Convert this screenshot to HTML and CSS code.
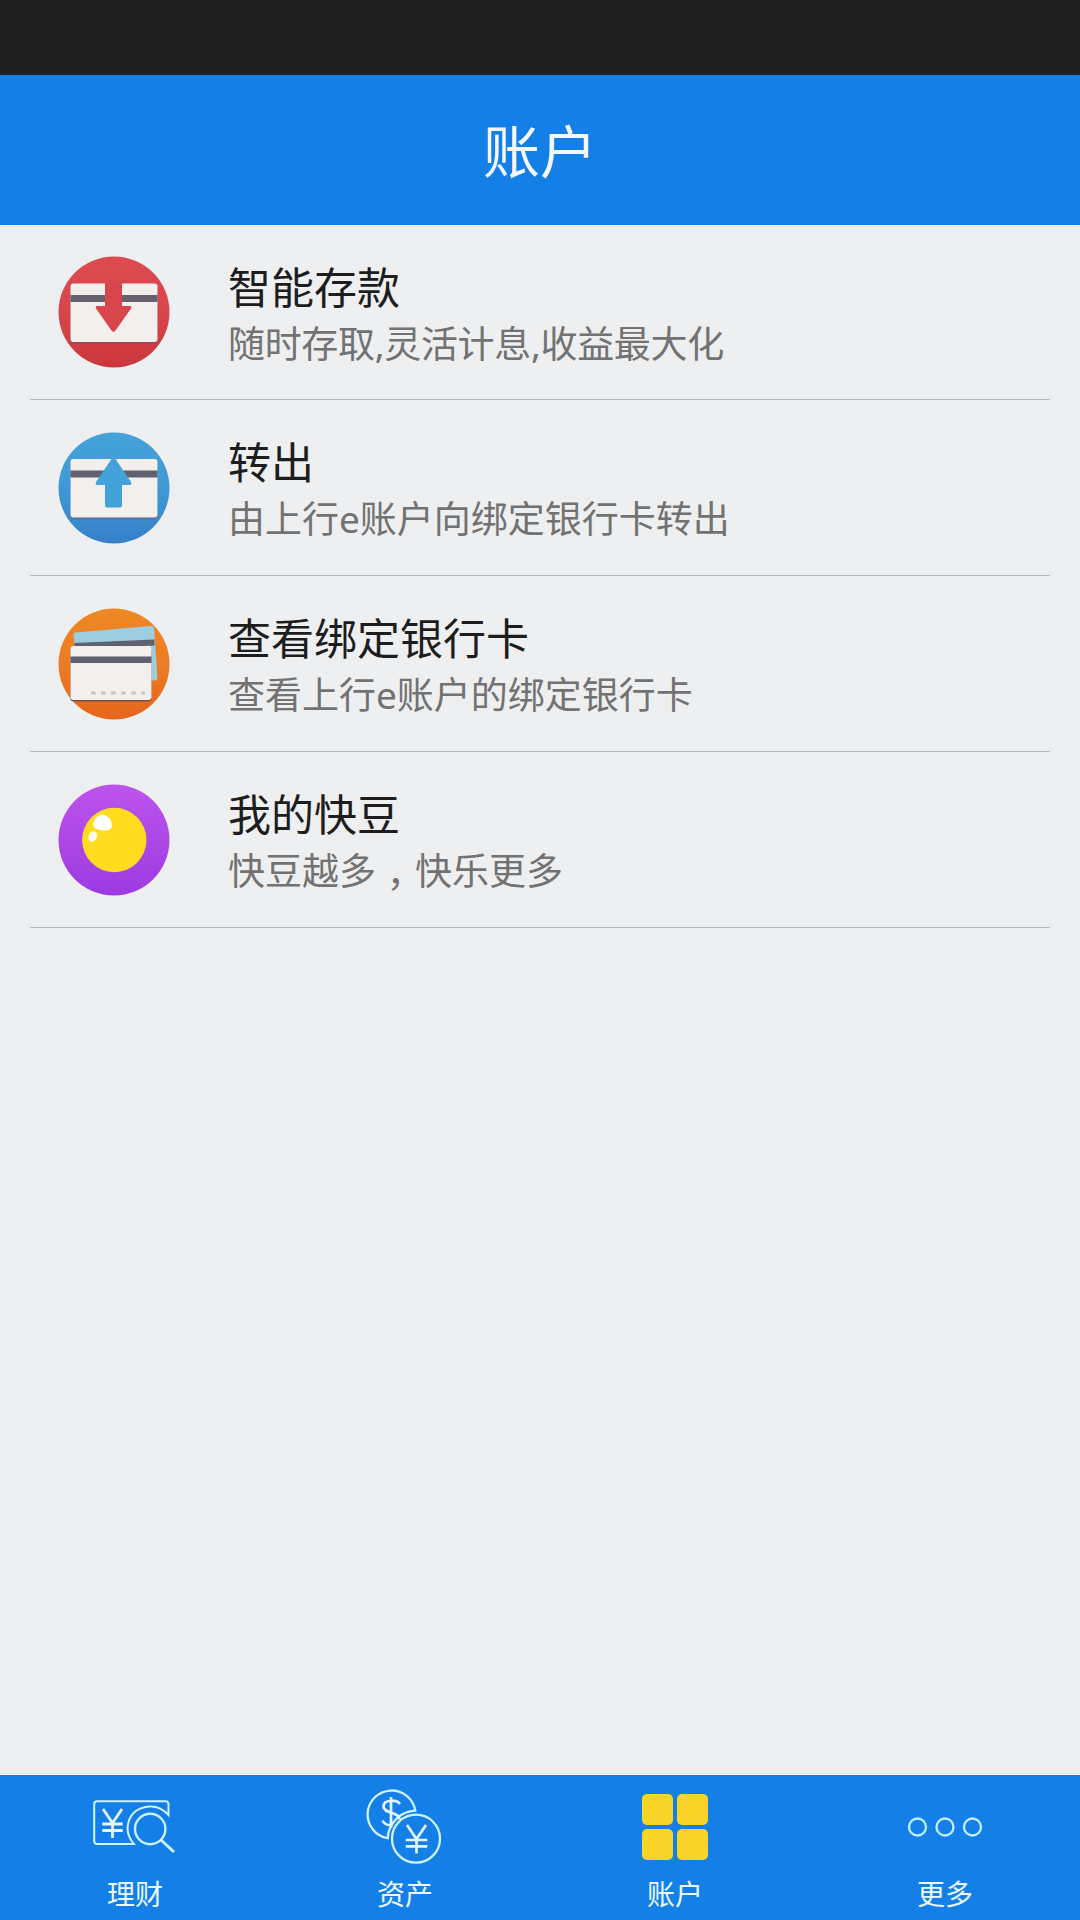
FILE: index.html
```html
<!DOCTYPE html>
<html lang="zh-CN">
<head>
<meta charset="utf-8">
<title>账户</title>
<link rel="stylesheet" href="styles.css">
</head>
<body>
<div class="status-bar"></div>
<header class="header"><h1 class="header-title">账户</h1></header>
<main class="list">
  <div class="row">
    <svg class="row-icon" viewBox="0 0 112 112">
      <defs><linearGradient id="red" x1="0" y1="0" x2="0" y2="1"><stop offset="0" stop-color="#dc4b50"/><stop offset=".5" stop-color="#d8454a"/><stop offset="1" stop-color="#c9363c"/></linearGradient></defs>
      <circle cx="56" cy="56" r="55.5" fill="url(#red)"/>
      <rect x="12.5" y="29" width="87" height="58.5" rx="3" fill="#8d4c57"/>
      <rect x="12.5" y="27.5" width="87" height="58.5" rx="3" fill="#f2efed"/>
      <path d="M12.5 39H99.5V46H12.5Z" fill="#66616f"/>
      <path d="M47 26.5H64V50H72Q74 50.5 73 52.5L57.5 74.5Q55.5 77 53.5 74.5L38 52.5Q37 50.5 39 50H47Z" fill="#d8454a"/>
    </svg>
    <div class="row-text"><div class="row-title">智能存款</div><div class="row-desc desc-tight">随时存取,灵活计息,收益最大化</div></div>
  </div>
  <div class="row">
    <svg class="row-icon" viewBox="0 0 112 112">
      <defs><linearGradient id="blue" x1="0" y1="0" x2="0" y2="1"><stop offset="0" stop-color="#44a3d9"/><stop offset=".5" stop-color="#3f99d6"/><stop offset="1" stop-color="#3680c8"/></linearGradient></defs>
      <circle cx="56" cy="56" r="55.5" fill="url(#blue)"/>
      <rect x="12.5" y="29" width="87" height="58.5" rx="3" fill="#586f98"/>
      <rect x="12.5" y="27" width="87" height="58.5" rx="3" fill="#f2efed"/>
      <path d="M12.5 38.5H99.5V45.5H12.5Z" fill="#5f6070"/>
      <path d="M53.5 27Q55.5 25 57.5 27L73 50Q74 52.5 72 53H64V73Q64 75.5 61.5 75.5H49.5Q47 75.5 47 73V53H39Q37 52.5 38 50Z" fill="#43a2d9"/>
    </svg>
    <div class="row-text"><div class="row-title">转出</div><div class="row-desc">由上行e账户向绑定银行卡转出</div></div>
  </div>
  <div class="row">
    <svg class="row-icon" viewBox="0 0 112 112">
      <defs><linearGradient id="orange" x1="0" y1="0" x2="0" y2="1"><stop offset="0" stop-color="#ee8825"/><stop offset=".5" stop-color="#ed7c22"/><stop offset="1" stop-color="#e5651c"/></linearGradient></defs>
      <circle cx="56" cy="56" r="55.5" fill="url(#orange)"/>
      <path d="M17 24.5L93 18Q96 18 96.2 21L99.5 70Q99 72.5 97 72.5L20 70L15.5 27Q15.5 25 17 24.5Z" fill="#9ccde1"/>
      <path d="M16.3 35L96.5 31.5V37.5L17 41Z" fill="#5f6070"/>
      <rect x="12.5" y="40" width="81" height="53.5" rx="3" fill="#75504b"/>
      <rect x="12.5" y="38" width="81" height="54" rx="3" fill="#f2efed"/>
      <path d="M12.5 48.5H93.5V55H12.5Z" fill="#5f6070"/>
      <path d="M33 85H87" stroke="#c4c3c5" stroke-width="3" stroke-dasharray="4.5 5.6"/>
    </svg>
    <div class="row-text"><div class="row-title">查看绑定银行卡</div><div class="row-desc">查看上行e账户的绑定银行卡</div></div>
  </div>
  <div class="row">
    <svg class="row-icon" viewBox="0 0 112 112">
      <defs><linearGradient id="purple" x1="0" y1="0" x2="0" y2="1"><stop offset="0" stop-color="#bd54ec"/><stop offset="1" stop-color="#9d3ae0"/></linearGradient></defs>
      <circle cx="56" cy="56" r="55.5" fill="url(#purple)"/>
      <circle cx="56.3" cy="56" r="32.2" fill="#ffdc20"/>
      <path d="M35 40Q37 31 45 30.5Q54 33 54 42Q53 47 46 46.5Q35 46 35 40Z" fill="#fff"/>
      <ellipse cx="34.8" cy="52.5" rx="4.2" ry="5.5" transform="rotate(25 34.8 52.5)" fill="#fffbe8"/>
    </svg>
    <div class="row-text"><div class="row-title">我的快豆</div><div class="row-desc desc-spaced"><span>快豆越多</span><span class="comma">，</span><span>快乐更多</span></div></div>
  </div>
</main>
<nav class="tabs">
  <div class="tab">
    <svg class="tab-icon" viewBox="0 0 90 90" fill="none" stroke="#cdf3ff" stroke-width="2.4">
      <path d="M44 57L42 54.5Q37.5 48 37.5 41Q39 21.500 59 19.500Q70 18.500 78.500 28V17.300Q78.500 14.300 75.500 14.300H7.200Q4.200 14.300 4.200 17.300V54Q4.200 57 7.200 57Z" stroke-width="2"/>
      <circle cx="60.2" cy="42" r="15.2"/>
      <path d="M71 53L84 65" stroke-width="3"/>
      <path d="M13 22L22.5 36L32 22M12.3 37H32.7M12.3 43.5H32.7M22.5 36V51" stroke="#e3f8ff" stroke-width="2.8"/>
    </svg>
    <span class="tab-label">理财</span>
  </div>
  <div class="tab">
    <svg class="tab-icon" viewBox="0 0 90 90" fill="none" stroke="#cdf3ff" stroke-width="2.3">
      <path d="M27.7 51.2A24 24 0 1 1 55.3 23.7A28.8 28.8 0 0 0 27.7 51.2Z"/>
      <circle cx="56" cy="51.7" r="24"/>
      <path d="M40 17C37 12.5 23.5 12 23.5 19.5C23.5 27 39.5 24.5 39.5 32.5M22.5 33.5Q25 38.5 31 38.2M31 10V41" stroke="#e3f8ff" stroke-width="2.7"/>
      <path d="M47 38L56.5 52L66 38M45.7 53H67.3M45.7 59.3H67.3M56.5 51V66.5" stroke="#e3f8ff" stroke-width="2.7"/>
    </svg>
    <span class="tab-label">资产</span>
  </div>
  <div class="tab">
    <svg class="tab-icon" viewBox="0 0 90 90" fill="#f7d427">
      <rect x="12" y="7" width="31" height="31" rx="5"/><rect x="47" y="7" width="31" height="31" rx="5"/>
      <rect x="12" y="42" width="31" height="31" rx="5"/><rect x="47" y="42" width="31" height="31" rx="5"/>
    </svg>
    <span class="tab-label">账户</span>
  </div>
  <div class="tab">
    <svg class="tab-icon" viewBox="0 0 90 90" fill="none" stroke="#bdeeff" stroke-width="2.4">
      <circle cx="17.5" cy="40" r="8.5"/><circle cx="45" cy="40" r="8.5"/><circle cx="72.5" cy="40" r="8.5"/>
    </svg>
    <span class="tab-label">更多</span>
  </div>
</nav>
</body>
</html>
```
FILE: styles.css
```css
* { box-sizing: border-box; }
body {
  margin: 0;
  height: 1920px;
  display: flex;
  flex-direction: column;
  background: #eeeff1;
  font-family: "Noto Sans", "Noto Sans CJK SC", sans-serif;
}
.status-bar { height: 75px; background: #1f1f1f; }
.header {
  height: 150px;
  padding-top: 1px;
  display: flex;
  align-items: center;
  justify-content: center;
  background: #157fe8;
}
.header-title {
  margin: 0;
  font-size: 57px;
  line-height: 80px;
  font-weight: 400;
  color: #f4f9ff;
}
.list { flex: 1; padding: 0 30px; }
.row {
  height: 176px;
  display: flex;
  align-items: center;
  padding-left: 28px;
  border-bottom: 1px solid #b4b5b7;
}
.row:first-child { height: 175px; }
.row-icon { width: 112px; height: 112px; flex: none; }
.row-text { margin-left: 58px; padding-top: 7px; white-space: nowrap; }
.row-title { font-size: 43px; line-height: 56px; color: #1d1d1d; }
.row-desc { font-size: 37px; line-height: 56px; color: #727272; }
.desc-tight { letter-spacing: -0.33px; }
.desc-spaced { display: flex; }
.comma {
  width: 39px;
  text-align: center;
  font-family: "Noto Sans CJK TC", sans-serif;
  transform: translateY(11px);
}
.tabs {
  height: 145px;
  display: grid;
  grid-template-columns: repeat(4, 1fr);
  background: #157fe8;
}
.tab { display: flex; flex-direction: column; align-items: center; padding-top: 12px; }
.tab-icon { width: 90px; height: 90px; }
.tab-label { font-size: 28px; line-height: 34px; color: #eafaff; }
```
